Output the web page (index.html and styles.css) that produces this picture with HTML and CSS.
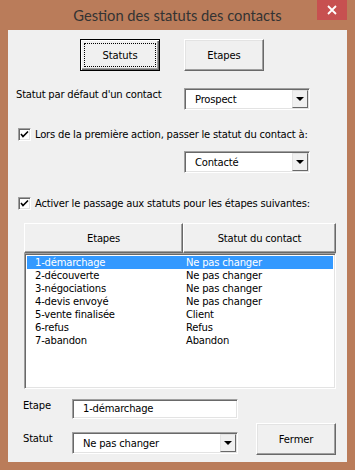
FILE: index.html
```html
<!DOCTYPE html>
<html lang="fr">
<head>
  <meta charset="UTF-8">
  <title>Gestion des statuts des contacts</title>
  <link rel="stylesheet" href="styles.css">
</head>
<body>
  <div class="window">
    <div class="titlebar">
      <span class="title">Gestion des statuts des contacts</span>
      <span class="close">
        <svg width="10" height="10" viewBox="0 0 10 10"><path d="M1 1 L9 9 M9 1 L1 9" stroke="#fff" stroke-width="1.8"/></svg>
      </span>
    </div>

    <div class="client">
      <div class="tabs">
        <button class="btn default"><span class="focus">Statuts</span></button>
        <button class="btn">Etapes</button>
      </div>

      <div class="row-default">
        <span class="label">Statut par défaut d'un contact</span>
        <div class="combo"><span class="value">Prospect</span><span class="drop"></span></div>
      </div>

      <div class="check">
        <span class="box"><svg width="9" height="9" viewBox="0 0 9 9"><path d="M1 4 L3 6.5 L8 1.5" fill="none" stroke="#000" stroke-width="1.6"/></svg></span>
        <span>Lors de la première action, passer le statut du contact à:</span>
      </div>

      <div class="row-second">
        <div class="combo"><span class="value">Contacté</span><span class="drop"></span></div>
      </div>

      <div class="check check-two">
        <span class="box"><svg width="9" height="9" viewBox="0 0 9 9"><path d="M1 4 L3 6.5 L8 1.5" fill="none" stroke="#000" stroke-width="1.6"/></svg></span>
        <span>Activer le passage aux statuts pour les étapes suivantes:</span>
      </div>

      <div class="list">
        <div class="list-head">
          <div class="col-head col-a">Etapes</div>
          <div class="col-head col-b">Statut du contact</div>
        </div>
        <div class="list-body">
          <div class="item selected"><span class="cell-a">1-démarchage</span><span>Ne pas changer</span></div>
          <div class="item"><span class="cell-a">2-découverte</span><span>Ne pas changer</span></div>
          <div class="item"><span class="cell-a">3-négociations</span><span>Ne pas changer</span></div>
          <div class="item"><span class="cell-a">4-devis envoyé</span><span>Ne pas changer</span></div>
          <div class="item"><span class="cell-a">5-vente finalisée</span><span>Client</span></div>
          <div class="item"><span class="cell-a">6-refus</span><span>Refus</span></div>
          <div class="item"><span class="cell-a">7-abandon</span><span>Abandon</span></div>
        </div>
      </div>

      <div class="bottom">
        <div class="fields">
          <div class="field">
            <span class="label small">Etape</span>
            <div class="textbox">1-démarchage</div>
          </div>
          <div class="field">
            <span class="label small">Statut</span>
            <div class="combo wide"><span class="value">Ne pas changer</span><span class="drop"></span></div>
          </div>
        </div>
        <button class="btn close-btn">Fermer</button>
      </div>
    </div>
  </div>
</body>
</html>
```

FILE: styles.css
```css
body {
  margin: 0;
  background: #ba7c5a;
  font-family: "DejaVu Sans", Tahoma, sans-serif;
  font-size: 10px;
  letter-spacing: -0.2px;
  color: #000;
}
.window {
  width: 355px;
  height: 470px;
  background: #ba7c5a;
  padding: 0 8px 8px;
  box-sizing: border-box;
}
.titlebar {
  position: relative;
  height: 30px;
  text-align: center;
}
.title {
  font-family: Lato, sans-serif;
  font-size: 14.7px;
  letter-spacing: 0;
  line-height: 31px;
  color: #333;
}
.close {
  position: absolute;
  top: 0;
  right: 0;
  width: 30px;
  height: 20px;
  background: #c75050;
  display: flex;
  align-items: center;
  justify-content: center;
}
.client {
  height: 432px;
  background: #f0f0f0;
  box-sizing: border-box;
  padding-top: 9px;
}
.tabs {
  display: flex;
  gap: 24px;
  padding-left: 72px;
}
.btn {
  width: 80px;
  height: 32px;
  background: #f0f0f0;
  font-family: "DejaVu Sans", Tahoma, sans-serif;
  font-size: 10px;
  letter-spacing: -0.1px;
  color: #000;
  border: 1px solid;
  border-color: #fff #696969 #696969 #fff;
  box-shadow: inset -1px -1px #a0a0a0, inset 1px 1px #e3e3e3;
  padding: 0;
  display: flex;
  align-items: center;
  justify-content: center;
}
.btn.default {
  border: 1px solid #000;
  box-shadow: inset 1px 1px #fff, inset -1px -1px #696969, inset -2px -2px #a0a0a0;
  padding: 3px;
}
.focus {
  border: 1px dotted #000;
  flex: 1;
  align-self: stretch;
  display: flex;
  align-items: center;
  justify-content: center;
}
.row-default {
  display: flex;
  align-items: flex-start;
  margin-top: 17px;
  padding-left: 8px;
}
.row-default .label {
  width: 168px;
  margin-top: 1px;
}
.combo {
  width: 126px;
  height: 22px;
  background: #fff;
  box-sizing: border-box;
  border: 1px solid;
  border-color: #a0a0a0 #fff #fff #a0a0a0;
  box-shadow: inset 1px 1px #696969, inset -1px -1px #e3e3e3;
  display: flex;
  align-items: center;
}
.combo .value {
  flex: 1;
  padding-left: 10px;
}
.drop {
  width: 16px;
  height: 18px;
  margin-right: 1px;
  box-sizing: border-box;
  background: #f0f0f0;
  border: 1px solid;
  border-color: #e3e3e3 #696969 #696969 #e3e3e3;
  display: flex;
  align-items: center;
  justify-content: center;
}
.drop::after {
  content: "";
  border-left: 4px solid transparent;
  border-right: 4px solid transparent;
  border-top: 4px solid #000;
}
.check {
  display: flex;
  align-items: center;
  gap: 4px;
  margin-top: 18px;
  padding-left: 10px;
}
.box {
  width: 13px;
  height: 13px;
  box-sizing: border-box;
  background: #fff;
  border: 1px solid;
  border-color: #a0a0a0 #fff #fff #a0a0a0;
  box-shadow: inset 1px 1px #696969, inset -1px -1px #e3e3e3;
  display: flex;
  align-items: center;
  justify-content: center;
}
.row-second {
  padding-left: 176px;
  margin-top: 10px;
}
.check-two {
  margin-top: 24px;
}
.list {
  margin: 13px 0 0 16px;
  width: 312px;
}
.list-head {
  display: flex;
}
.col-head {
  height: 30px;
  box-sizing: border-box;
  background: #f0f0f0;
  border: 1px solid;
  border-color: #fff #696969 #696969 #fff;
  box-shadow: inset -1px -1px #a0a0a0;
  display: flex;
  align-items: center;
  justify-content: center;
}
.col-a {
  width: 159px;
}
.col-b {
  width: 153px;
}
.list-body {
  height: 136px;
  background: #fff;
  box-sizing: border-box;
  border: 1px solid;
  border-color: #a0a0a0 #fff #fff #a0a0a0;
  box-shadow: inset 1px 1px #696969, inset -1px -1px #e3e3e3;
  padding: 2px 2px 0;
}
.item {
  display: flex;
  height: 13px;
  line-height: 13px;
}
.item.selected {
  background: #3399ff;
  color: #fff;
}
.cell-a {
  width: 151px;
  padding-left: 8px;
}
.bottom {
  display: flex;
  align-items: flex-end;
  margin-top: 10px;
  padding-left: 15px;
}
.fields {
  width: 233px;
}
.field {
  display: flex;
  align-items: flex-start;
  margin-bottom: 13px;
}
.field + .field {
  margin-bottom: 8px;
}
.label.small {
  width: 49px;
  margin-top: 1px;
}
.textbox {
  width: 166px;
  height: 20px;
  box-sizing: border-box;
  background: #fff;
  border: 1px solid;
  border-color: #a0a0a0 #fff #fff #a0a0a0;
  box-shadow: inset 1px 1px #696969, inset -1px -1px #e3e3e3;
  padding-left: 10px;
  line-height: 18px;
}
.combo.wide {
  width: 166px;
}
.close-btn {
  margin-bottom: 7px;
}
```
